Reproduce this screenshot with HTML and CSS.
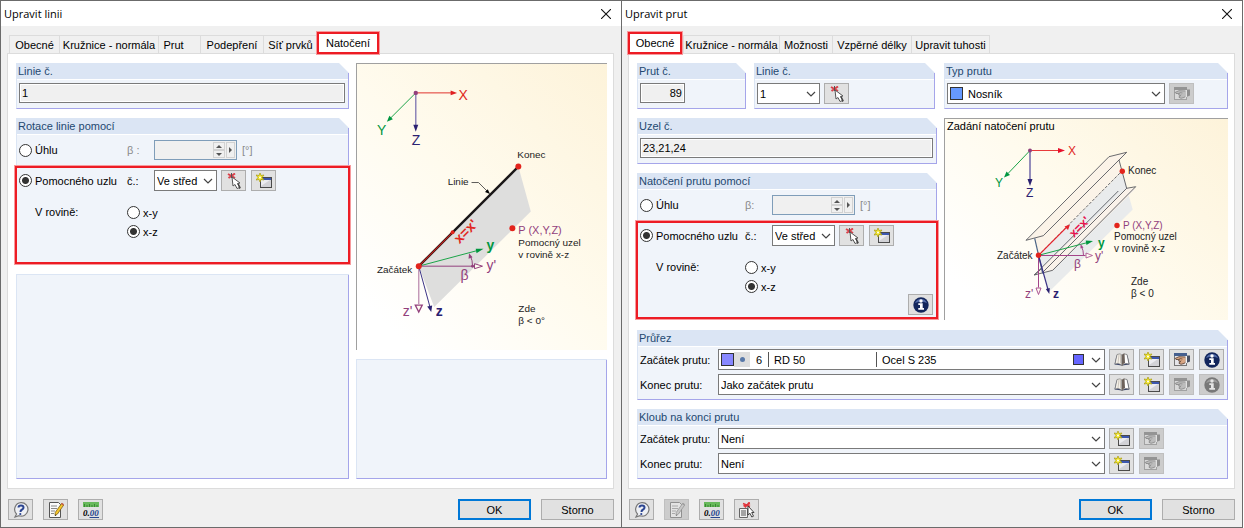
FILE: index.html
```html
<!DOCTYPE html>
<html lang="cs">
<head>
<meta charset="utf-8">
<title>Upravit linii / Upravit prut</title>
<link rel="stylesheet" href="styles.css">
</head>
<body>
<svg class="sprite" aria-hidden="true">
  <symbol id="chevron" viewBox="0 0 10 6"><path d="M1 1l4 4 4-4" fill="none" stroke="#444" stroke-width="1.2"/></symbol>
  <symbol id="close" viewBox="0 0 10 10"><path d="M0 0l10 10M10 0L0 10" stroke="#111" stroke-width="1.1"/></symbol>
  <symbol id="pick" viewBox="0 0 16 16">
    <path d="M2 1l7 4M9 .5L2.500 5" stroke="#d9414a" stroke-width="2"/><path d="M5.500 0v5" stroke="#555" stroke-width="1"/>
    <path d="M6 4l1 9 2-1.500 2 4 2.500-1-2-4 2.500-.5z" fill="#fff" stroke="#555" stroke-width="1"/>
    <path d="M12 10.500l2 4-1 1" fill="none" stroke="#444" stroke-width="1.400"/>
  </symbol>
  <symbol id="new" viewBox="0 0 16 16">
    <rect x="4.500" y="4.500" width="11" height="10" fill="#d2d2d6" stroke="#4a4a4a"/><path d="M5 5h10v2H5z" fill="#3c57b0"/><path d="M5 7h9L5 13z" fill="#ececf0"/>
    <path d="M4 0l1 2.500L8 2 6 4.500 8 7 5 6.500 4 9 3 6.500 0 7l2-2.500L0 2l3 .5z" fill="#f3e62a" stroke="#a89c10" stroke-width=".7"/><circle cx="4" cy="4.500" r="1" fill="#fff"/>
  </symbol>
  <symbol id="edit" viewBox="0 0 16 16">
    <rect x=".5" y="1.500" width="12" height="12" fill="#e6e6ea" stroke="#777"/><path d="M0 1h13v3H0z" fill="#46608f"/>
    <path d="M1 6.500l4-1.800 7 .3v5l-2 1.500-3 .8-2-1 1.500-1.800-2-.7 1-1.300H2z" fill="#d8a684" stroke="#54392a" stroke-width=".8"/>
    <path d="M7 8.500l-2 2M5.500 6.500l3 .5" stroke="#54392a" stroke-width=".7"/>
    <path d="M12.500 3.500H16v6l-3.500 1.500z" fill="#4a5264"/><path d="M11.500 4H13v7h-1.500z" fill="#f4f4f4"/>
  </symbol>
  <symbol id="info" viewBox="0 0 16 16">
    <circle cx="8" cy="8" r="7.700" fill="#13265c"/><path d="M2 6a6.500 6.500 0 0 1 12 0Q8 3 2 6z" fill="#526ba8"/>
    <circle cx="8" cy="4" r="1.700" fill="#fff"/><path d="M5.300 6.300h4.400V11H11v1.800H5.300V11H7V8H5.300z" fill="#fff"/>
  </symbol>
  <symbol id="book" viewBox="0 0 16 16">
    <path d="M.5 12.500L2.500 3.500h11l2 9-7.500 1z" fill="#39456b"/>
    <path d="M1 12L3 2.500q3.500-1.500 5 .5v10.500Q5 10.500 1 12z" fill="#f4f0e8" stroke="#777" stroke-width=".7"/>
    <path d="M15 12L13 2.500Q9.500 1 8 3v10.500q3-3 7-1.500z" fill="#fff" stroke="#666" stroke-width=".7"/>
    <path d="M8 3q1-1.500 2.500-1.500L11 11q-2 .5-3 2.500z" fill="#6d625b"/><path d="M5 3L4 11M6.500 3v8.500" stroke="#c2bab0" stroke-width=".8"/>
  </symbol>
  <symbol id="help" viewBox="0 0 16 16">
    <path d="M8 .7a6.700 6.700 0 1 1-2 13L2 15l1.500-3A6.700 6.700 0 0 1 8 .7z" fill="#eef0f4" stroke="#777" stroke-width="1.200"/>
    <path d="M5.500 5.500Q5.500 3.500 8 3.500t2.500 2Q10.500 7 8.500 8 7.500 8.500 7.500 10" fill="none" stroke="#2c4591" stroke-width="2"/><circle cx="7.300" cy="12" r="1.100" fill="#2c4591"/>
  </symbol>
  <symbol id="note" viewBox="0 0 16 16">
    <path d="M1.500 .5h9l2 2v13h-11z" fill="#fafafa" stroke="#555"/><path d="M3 4h6M3 6.500h6M3 9h4M3 11.500h3" stroke="#888"/>
    <path d="M13.500 1.500l2.200 1.500-6.200 9-2.500 1.500.2-3z" fill="#f5c52a" stroke="#6b5210" stroke-width=".7"/><path d="M14 .7l2 1.500-.8 1.300-2.200-1.500z" fill="#c85b4c"/><path d="M7 14l.2-1.500 1.200.7z" fill="#222"/>
  </symbol>
  <symbol id="units" viewBox="0 0 16 16">
    <rect x="0" y="0" width="16" height="5" fill="#67b95b"/><path d="M1.500 2v3M4 3v2M6.500 2v3M9 3v2M11.500 2v3M14 3v2" stroke="#2e7a2a" stroke-width=".8"/>
    <path d="M6.500 15.500H16" stroke="#26468f"/>
  </symbol>
  <symbol id="listpick" viewBox="0 0 16 16">
    <path d="M.5 6.500h8v9h-8z" fill="#f2f2f2" stroke="#666"/><path d="M2 9h5M2 11h5M2 13h5" stroke="#555"/>
    <path d="M4 1.500l7 3M10.500 0L6 5.500M4.500 4L11 1.500" stroke="#e0343c" stroke-width="1.500"/>
    <path d="M9 4v9l2-1.700 1.800 3.700 1.700-.8-1.800-3.700H15z" fill="#fff" stroke="#333" stroke-width=".9"/>
  </symbol>
</svg>

<main class="desktop">
  <section class="window" aria-label="Upravit linii">
    <header class="titlebar"><h1>Upravit linii</h1><button class="close" aria-label="Zavřít"><svg><use href="#close"/></svg></button></header>
    <nav class="tabs tabs-line" role="tablist">
      <button role="tab" class="tab">Obecné</button><button role="tab" class="tab">Kružnice - normála</button><button role="tab" class="tab">Prut</button><button role="tab" class="tab">Podepření</button><button role="tab" class="tab">Síť prvků</button><button role="tab" class="tab active" aria-selected="true">Natočení</button>
    </nav>
    <div class="panel">
      <div class="cols cols-line">
        <div class="stack">
          <section class="group">
            <h2><label for="line-no">Linie č.</label></h2>
            <div class="body"><input id="line-no" class="field" value="1" readonly></div>
          </section>
          <section class="group">
            <h2>Rotace linie pomocí</h2>
            <div class="body rotation">
              <div class="row">
                <label class="radio"><input type="radio" name="l-mode">Úhlu</label>
                <label class="muted" for="l-beta">β :</label>
                <div class="tools">
                  <span class="spinner"><input id="l-beta" disabled><span class="updown"><button disabled aria-label="Více"><i class="up"></i></button><button disabled aria-label="Méně"><i class="down"></i></button></span><button class="side" disabled aria-label="Další"><i class="right"></i></button></span>
                  <span class="unit">[°]</span>
                </div>
              </div>
              <div class="callout">
                <div class="row">
                  <label class="radio"><input type="radio" name="l-mode" checked>Pomocného uzlu</label>
                  <label for="l-node">č.:</label>
                  <div class="tools">
                    <span class="select small"><select id="l-node"><option>Ve střed</option></select><svg><use href="#chevron"/></svg></span>
                    <button class="icon" aria-label="Vybrat"><svg><use href="#pick"/></svg></button>
                    <button class="icon last" aria-label="Nový"><svg><use href="#new"/></svg></button>
                  </div>
                </div>
                <div class="plane">
                  <span class="plane-label">V rovině:</span>
                  <div><label class="radio"><input type="radio" name="l-plane">x-y</label><label class="radio"><input type="radio" name="l-plane" checked>x-z</label></div>
                </div>
              </div>
            </div>
          </section>
          <section class="group empty"></section>
        </div>
        <div class="stack">
          <svg class="picture" viewBox="356 63 251 287" role="img" aria-label="Natočení linie">
            <path d="M518 166l12.500 45-97 96L418 266z" fill="#dededd"/>
            <path d="M415 92h37" stroke="#e0322c"/><path d="M450 89.500l6.500 2.500-6.500 2.500z" fill="#e02020"/>
            <path d="M415 92l-26 26" stroke="#1aa348"/><path d="M386 121l2.500-6 3.500 3.500z" fill="#009640"/>
            <path d="M415 92v33" stroke="#8d84b8" stroke-width="1.500"/><path d="M412.500 124h5l-2.500 7z" fill="#2b2171"/>
            <circle cx="415" cy="92" r="2.200" fill="#92407c"/>
            <text x="458" y="99" class="t14 red">X</text><text x="376" y="134" class="t14 green">Y</text><text x="411" y="144" class="t14 navy">Z</text>
            <path d="M418 266L518 166" stroke="#1a1718" stroke-width="2.400"/>
            <path d="M418 266l34-34" stroke="#c5201c" stroke-width="1.200"/>
            <path d="M471 182h7l9 9" fill="none" stroke="#333" stroke-width=".8"/><path d="M489.500 193.500l-5-2 2.800-2.800z"/>
            <text x="517" y="157" class="t10">Konec</text><text x="447" y="184" class="t10">Linie</text><text x="376" y="273" class="t10">Začátek</text>
            <path d="M418 266l60-16" stroke="#1aa348"/><path d="M483 248.500l-7 4.500-.8-4.500z" fill="#009640"/>
            <path d="M418 266h56" stroke="#92407c"/><path d="M474 263.500l8 2.500-8 2.500z" fill="#fffdf2" stroke="#92407c"/>
            <path d="M472 266q0-6-2-10" fill="none" stroke="#92407c"/><path d="M468.500 253l3.500 4-4 1.500z" fill="#92407c"/><circle cx="472" cy="266" r="1.500" fill="#92407c"/>
            <path d="M418 266v38" stroke="#bd8db0" stroke-width="1.300"/><path d="M414.500 305h7l-3.500 7z" fill="#fffdf2" stroke="#92407c" stroke-width="1.300"/>
            <path d="M418 266l11 40" stroke="#3a3285"/><path d="M430.500 312l-4-5.500 5-1z" fill="#2b2171"/>
            <circle cx="418" cy="266" r="3" fill="#e3241c"/><circle cx="518" cy="166" r="3" fill="#e3241c"/><circle cx="452" cy="232" r="2" fill="#e3241c"/><circle cx="512" cy="228" r="3" fill="#e3241c"/>
            <text transform="translate(459 244) rotate(-45)" class="t14 red bold">x=x'</text>
            <text x="486" y="250" class="t14 green bold">y</text><text x="486" y="270" class="t14 plum">y'</text><text x="460" y="280" class="t14 plum">β</text>
            <text x="402" y="316" class="t14 plum">z'</text><text x="435" y="316" class="t14 navy bold">z</text>
            <text x="518" y="234" class="t11 plum">P (X,Y,Z)</text><text x="518" y="246" class="t10">Pomocný uzel</text><text x="518" y="258" class="t10">v rovině x-z</text>
            <text x="518" y="312" class="t10">Zde</text><text x="518" y="324" class="t10">β &lt; 0°</text>
          </svg>
          <section class="group empty"></section>
        </div>
      </div>
    </div>
    <footer class="actions">
      <button class="icon" aria-label="Nápověda"><svg><use href="#help"/></svg></button>
      <button class="icon" aria-label="Komentář"><svg><use href="#note"/></svg></button>
      <button class="icon" aria-label="Jednotky"><svg viewBox="0 0 16 16"><use href="#units"/><text x="0" y="14" class="units-text">0.<tspan fill="#26468f">00</tspan></text></svg></button>
      <span class="fill"></span>
      <button class="btn primary">OK</button><button class="btn">Storno</button>
    </footer>
  </section>

  <section class="window member" aria-label="Upravit prut">
    <header class="titlebar"><h1>Upravit prut</h1><button class="close" aria-label="Zavřít"><svg><use href="#close"/></svg></button></header>
    <nav class="tabs tabs-member" role="tablist">
      <button role="tab" class="tab active" aria-selected="true">Obecné</button><button role="tab" class="tab">Kružnice - normála</button><button role="tab" class="tab">Možnosti</button><button role="tab" class="tab">Vzpěrné délky</button><button role="tab" class="tab">Upravit tuhosti</button>
    </nav>
    <div class="panel">
      <div class="cols cols-member">
        <div class="stack">
          <div class="pair">
            <section class="group">
              <h2><label for="m-no">Prut č.</label></h2>
              <div class="body"><input id="m-no" class="field number" value="89" readonly></div>
            </section>
            <section class="group">
              <h2><label for="m-line">Linie č.</label></h2>
              <div class="body tools">
                <span class="select small"><select id="m-line"><option>1</option></select><svg><use href="#chevron"/></svg></span>
                <button class="icon" aria-label="Vybrat"><svg><use href="#pick"/></svg></button>
              </div>
            </section>
          </div>
          <section class="group">
            <h2><label for="m-nodes">Uzel č.</label></h2>
            <div class="body"><input id="m-nodes" class="field" value="23,21,24" readonly></div>
          </section>
          <section class="group">
            <h2>Natočení prutu pomocí</h2>
            <div class="body rotation">
              <div class="row">
                <label class="radio"><input type="radio" name="m-mode">Úhlu</label>
                <label class="muted" for="m-beta">β:</label>
                <div class="tools">
                  <span class="spinner"><input id="m-beta" disabled><span class="updown"><button disabled aria-label="Více"><i class="up"></i></button><button disabled aria-label="Méně"><i class="down"></i></button></span><button class="side" disabled aria-label="Další"><i class="right"></i></button></span>
                  <span class="unit">[°]</span>
                </div>
              </div>
              <div class="callout">
                <div class="row">
                  <label class="radio"><input type="radio" name="m-mode" checked>Pomocného uzlu</label>
                  <label for="m-node">č.:</label>
                  <div class="tools">
                    <span class="select small"><select id="m-node"><option>Ve střed</option></select><svg><use href="#chevron"/></svg></span>
                    <button class="icon" aria-label="Vybrat"><svg><use href="#pick"/></svg></button>
                    <button class="icon last" aria-label="Nový"><svg><use href="#new"/></svg></button>
                  </div>
                </div>
                <div class="plane">
                  <span class="plane-label">V rovině:</span>
                  <div><label class="radio"><input type="radio" name="m-plane">x-y</label><label class="radio"><input type="radio" name="m-plane" checked>x-z</label></div>
                  <button class="icon info" aria-label="Informace"><svg><use href="#info"/></svg></button>
                </div>
              </div>
            </div>
          </section>
        </div>
        <div class="stack">
          <section class="group">
            <h2><label for="m-type">Typ prutu</label></h2>
            <div class="body tools">
              <span class="select type"><select id="m-type"><option>Nosník</option></select><i class="swatch"></i><svg><use href="#chevron"/></svg></span>
              <button class="icon" disabled aria-label="Upravit typ"><svg><use href="#edit"/></svg></button>
            </div>
          </section>
          <svg class="picture" viewBox="945 119 283 201" role="img" aria-label="Natočení prutu">
            <path d="M1038.500 255.500L1122 171l10.700 38.500-83.400 82z" fill="#e9ebec"/>
            <path d="M1026 240.300l83-83.600 17.700-4.400-7.500 8.500 3 11L1039 255l-4.300-17z" fill="#fbf3e8"/>
            <path d="M1034 275l92.700-87 9 .7-83 82z" fill="#faf2ea"/>
            <text x="947" y="130" class="t11 ink">Zadání natočení prutu</text>
            <path d="M1030 150.500h30" stroke="#e83a3a"/><path d="M1058 148l7 2.500-7 2.500z" fill="#e8102c"/>
            <path d="M1030 150.500l-22 23" stroke="#1aa348"/><path d="M1004 177.500l2.500-6 3.500 3.500z" fill="#009640"/>
            <path d="M1030 150.500v29" stroke="#6f67a8" stroke-width="1.500"/><path d="M1027.500 179h5l-2.500 7z" fill="#2b2171"/>
            <circle cx="1030" cy="150.500" r="2" fill="#92407c"/>
            <text x="1068" y="155" class="t12 red">X</text><text x="995" y="187" class="t12 green">Y</text><text x="1026" y="197" class="t12 navy">Z</text>
            <g fill="none" stroke="#44464e" stroke-width=".8">
              <path d="M1026 240.300l83-83.600 17.700-4.400-83.400 83.400z"/>
              <path d="M1034.300 275l84-84M1042 273l84.700-84.700 9-1.600-83 83.600-18.400 4.700 8-7"/>
              <path d="M1119 160l7.700 28.500"/><path d="M1038.500 255.300L1122 171" stroke-dasharray="3 1.500"/>
            </g>
            <path d="M1034.700 238.300l8 35" stroke="#4b6486" stroke-width="1.200"/>
            <path d="M1038.500 255.300l28-28" stroke="#e8202a" stroke-width="1.200"/><path d="M1070 224.500l-2 5.500-3.500-3.500z" fill="#e8202a"/>
            <path d="M1038.500 255.300l50-13" stroke="#1aa348"/><path d="M1093 241l-6.500 4-.8-4.500z" fill="#009640"/>
            <path d="M1038.500 255.500h47" stroke="#a34489"/><path d="M1086 253l6.500 2.500-6.500 2.500z" fill="#fffdf2" stroke="#a34489" stroke-width=".8"/>
            <path d="M1083.500 255.500q0-5-2-9" fill="none" stroke="#a34489"/><path d="M1080.500 244l3 3.500-3 1z" fill="#a34489"/>
            <path d="M1038.500 255.500v32" stroke="#a34489"/><path d="M1036 288h5l-2.500 6.500z" fill="#fffdf2" stroke="#a34489" stroke-width=".9"/>
            <path d="M1038.500 255.500l9.500 34" stroke="#3a3285" stroke-width="1.200"/><path d="M1049.300 294l-3.500-5 4-1z" fill="#2b2171"/>
            <circle cx="1038.500" cy="255.300" r="2.700" fill="#e3241c"/><circle cx="1122.300" cy="171.300" r="2.700" fill="#e3241c"/><circle cx="1117" cy="225.500" r="2.700" fill="#e3241c"/>
            <text transform="translate(1074 238) rotate(-45)" class="t12 crimson bold">x=x'</text>
            <text x="1128" y="174" class="t10">Konec</text><text x="997" y="259" class="t10">Začátek</text>
            <text x="1098" y="247" class="t12 green bold">y</text><text x="1095" y="260" class="t12 plum">y'</text><text x="1074" y="268" class="t12 plum">β</text>
            <text x="1025" y="298" class="t12 plum">z'</text><text x="1053" y="298" class="t12 navy bold">z</text>
            <text x="1123" y="229" class="t10 plum">P (X,Y,Z)</text><text x="1114" y="240" class="t10">Pomocný uzel</text><text x="1114" y="252" class="t10">v rovině x-z</text>
            <text x="1131" y="285" class="t10">Zde</text><text x="1131" y="297" class="t10">β &lt; 0</text>
          </svg>
        </div>
      </div>
      <section class="group section-group">
        <h2>Průřez</h2>
        <div class="body lines">
          <div class="line">
            <label for="s-start">Začátek prutu:</label>
            <span class="select detailed"><select id="s-start"><option>6</option></select>
              <span class="material"><i class="swatch"></i><i class="shape"></i><span class="name">RD 50</span><span class="steel">Ocel S 235</span><i class="swatch tail"></i></span>
              <svg><use href="#chevron"/></svg></span>
            <button class="icon" aria-label="Knihovna"><svg><use href="#book"/></svg></button><button class="icon" aria-label="Nový"><svg><use href="#new"/></svg></button><button class="icon" aria-label="Upravit"><svg><use href="#edit"/></svg></button><button class="icon" aria-label="Informace"><svg><use href="#info"/></svg></button>
          </div>
          <div class="line">
            <label for="s-end">Konec prutu:</label>
            <span class="select"><select id="s-end"><option>Jako začátek prutu</option></select><svg><use href="#chevron"/></svg></span>
            <button class="icon" aria-label="Knihovna"><svg><use href="#book"/></svg></button><button class="icon" aria-label="Nový"><svg><use href="#new"/></svg></button><button class="icon" disabled aria-label="Upravit"><svg><use href="#edit"/></svg></button><button class="icon" disabled aria-label="Informace"><svg><use href="#info"/></svg></button>
          </div>
        </div>
      </section>
      <section class="group">
        <h2>Kloub na konci prutu</h2>
        <div class="body lines">
          <div class="line">
            <label for="h-start">Začátek prutu:</label>
            <span class="select"><select id="h-start"><option>Není</option></select><svg><use href="#chevron"/></svg></span>
            <button class="icon" aria-label="Nový"><svg><use href="#new"/></svg></button><button class="icon" disabled aria-label="Upravit"><svg><use href="#edit"/></svg></button>
          </div>
          <div class="line">
            <label for="h-end">Konec prutu:</label>
            <span class="select"><select id="h-end"><option>Není</option></select><svg><use href="#chevron"/></svg></span>
            <button class="icon" aria-label="Nový"><svg><use href="#new"/></svg></button><button class="icon" disabled aria-label="Upravit"><svg><use href="#edit"/></svg></button>
          </div>
        </div>
      </section>
    </div>
    <footer class="actions">
      <button class="icon" aria-label="Nápověda"><svg><use href="#help"/></svg></button>
      <button class="icon" disabled aria-label="Komentář"><svg><use href="#note"/></svg></button>
      <button class="icon" aria-label="Jednotky"><svg viewBox="0 0 16 16"><use href="#units"/><text x="0" y="14" class="units-text">0.<tspan fill="#26468f">00</tspan></text></svg></button>
      <button class="icon" aria-label="Převzít"><svg><use href="#listpick"/></svg></button>
      <span class="fill"></span>
      <button class="btn primary">OK</button><button class="btn">Storno</button>
    </footer>
  </section>
</main>
</body>
</html>
```
FILE: styles.css
```css
* { box-sizing: border-box; }
body { margin: 0; background: #fff; color: #000; font: 11px/14px "Liberation Sans", Arial, sans-serif; }
button, input, select { margin: 0; padding: 0; font: inherit; color: inherit; border-radius: 0; }
h1, h2 { margin: 0; font-weight: 400; }
.sprite { display: none; }

.desktop { display: grid; grid-template-columns: 621fr 622fr; min-height: 100vh; padding-right: 1px; }
.window { display: flex; flex-direction: column; min-width: 0; background: #f0f0f0; border: 1px solid #6b6b6b; border-right: 0; }
.window:last-child { border-right: 1px solid #6b6b6b; }

.titlebar { display: flex; align-items: center; justify-content: space-between; height: 25px; padding: 0 10px 0 3px; background: #fff; }
.titlebar h1 { font: 11px/15px "Open Sans", "Noto Sans", sans-serif; }
.close { display: flex; border: 0; background: none; }
.close svg { width: 10px; height: 10px; }

.tabs { display: grid; height: 19px; margin: 9px 7px -1px 6px; }
.tabs-line { grid-template-columns: 50px 99px 42px 63px 54px 63px; padding-left: 2px; }
.tabs-member { grid-template-columns: 55px 96px 53px 79px 79px; }
.tab { padding: 0; border: 1px solid #dcdcdc; border-right: 0; background: #f0f0f0; text-align: center; white-space: nowrap; }
.tab:last-child { border-right: 1px solid #dcdcdc; }
.tabs-line .tab:nth-child(3) { padding-right: 12px; }
.tab.active { z-index: 1; margin: -4px 0 -1px -1px; border: 3px solid #ed1c24; outline: 1px solid #f79a9d; outline-offset: -1px; background: #fff; }

.panel { display: flex; flex: 1; flex-direction: column; margin: 0 7px 0 6px; padding: 9px 6px 9px 8px; background: #fff; border: 1px solid #dcdcdc; }
.cols { display: grid; gap: 7px; }
.cols-line { flex: 1; grid-template-columns: 333fr 251fr; }
.cols-member { grid-template-columns: 300fr 284fr; }
.stack { display: flex; flex-direction: column; gap: 9px; min-width: 0; }
.pair { display: grid; grid-template-columns: 109fr 181fr; gap: 8px; padding-right: 2px; }

.group { position: relative; background: #f0f4fa; border-left: 1px solid #dbe5f4; border-bottom: 1px solid #a5a5ea; }
.group::after { content: ""; position: absolute; top: 10px; right: 0; bottom: 0; width: 1px; background: #a5a5ea; }
.group h2 { height: 17px; padding: 1px; color: #234870; font-size: 11px; line-height: 15px; background: #dbe5f4; border-bottom: 1px solid #fff; clip-path: polygon(0 0, calc(100% - 10px) 0, 100% 10px, 100% 100%, 0 100%); }
.group:has(h2) { background: linear-gradient(#fff 17px, #f0f4fa 17px); }
.body { padding: 3px 4px 5px 2px; }
.empty { flex: 1; border-top: 1px solid #dbe5f4; }
.empty::after { top: 0; }
.section-group { margin: 10px 0 9px; }

.field { display: block; width: 100%; height: 20px; padding: 0 2px; background: #f0f0f0; border: 1px solid #7a7a7a; box-shadow: inset 0 0 0 1px #fff; outline: 0; }
.number { width: 45px; text-align: right; }

.tools { display: flex; align-items: center; }
.body.tools { padding-bottom: 4px; }
.select { position: relative; display: block; flex: 1; min-width: 0; height: 21px; }
.select.small { flex: 0 0 63px; }
.select select { display: block; width: 100%; height: 100%; padding: 0 18px 0 2px; appearance: none; background: #fff; border: 1px solid #7a7a7a; }
.select > svg { position: absolute; top: 8px; right: 4px; width: 10px; height: 6px; pointer-events: none; }
.select.type { flex: 0 1 218px; }
.type select { padding-left: 20px; }
.swatch { width: 13px; height: 13px; background: #69f; border: 1px solid #333; }
.type .swatch { position: absolute; top: 4px; left: 3px; }
.detailed select { padding-left: 37px; }
.material { position: absolute; inset: 3px 21px 3px 3px; display: flex; align-items: center; pointer-events: none; }
.material .swatch { background: #88f; }
.shape { display: grid; place-items: center; width: 16px; height: 15px; margin-right: 18px; background: #dedede; }
.shape::after { content: ""; width: 5px; height: 5px; border-radius: 50%; background: #5878a8; }
.name, .steel { height: 15px; padding-left: 5px; border-left: 1px solid #555; line-height: 16px; }
.name { width: 108px; }
.material .tail { width: 11px; height: 11px; margin-left: auto; background: #66f; }

.icon { display: flex; flex: none; align-items: center; justify-content: center; width: 25px; height: 21px; background: #e1e1e1; border: 1px solid #adadad; }
.icon svg { width: 16px; height: 16px; }
.icon:disabled { background: #ccc; border-color: #bfbfbf; }
.icon:disabled svg { filter: grayscale(1); opacity: .5; }
.tools .icon { margin-left: 4px; }
.tools .icon.last { margin-left: 5px; }

.rotation { padding: 5px 2px 0; }
.group:has(.callout) { border-bottom: 0; }
.row { display: grid; grid-template-columns: 108px 27px 1fr; align-items: center; min-height: 20px; }
.radio { display: flex; align-items: center; gap: 3px; height: 19px; white-space: nowrap; }
.radio input { flex: none; width: 13px; height: 13px; appearance: none; background: #fff; border: 1px solid #333; border-radius: 50%; }
.radio input:checked { background: radial-gradient(circle, #333 3px, #fff 4px); }
.muted, .unit { color: #8a8a8a; }
.unit { margin-left: 5px; }
.spinner { display: flex; gap: 1px; width: 83px; height: 20px; padding: 1px; background: #f0f0f0; border: 1px solid #7f9db9; }
.spinner input { flex: 1; min-width: 0; border: 0; background: none; }
.updown { display: grid; width: 12px; }
.spinner button { display: grid; place-items: center; border: 1px solid #d2d2d2; background: #f0f0f0; }
.side { width: 9px; }
.up, .down, .right { border: 3px solid transparent; }
.up { border-top: 0; border-bottom-color: #555; }
.down { border-bottom: 0; border-top-color: #555; }
.right { border-right: 0; border-left-color: #555; }

.callout { position: relative; margin-top: 5px; padding-top: 5px; height: 100px; }
.callout::after { content: ""; position: absolute; z-index: 2; inset: 0 -4px 0 -5px; border: 3px solid #ed1c24; outline: 1px solid #f79a9d; outline-offset: -1px; pointer-events: none; }
.plane { display: grid; grid-template-columns: 92px 1fr auto; margin: 12px 0 0 16px; }
.plane-label { line-height: 19px; }
.info { align-self: end; margin: 0 2px -19px 0; }
.member .row { grid-template-columns: 105px 27px 1fr; }
.member .plane { grid-template-columns: 89px 1fr auto; }

.picture { display: block; width: 100%; height: auto; border-left: 1px solid #a0a0a0; border-top: 1px solid #a0a0a0; background: linear-gradient(45deg, #fff 10%, #fffbee 50%, #fdf3da); }
.picture text { fill: #222; }
.t10 { font-size: 10px; }
.t11 { font-size: 11px; }
.t12 { font-size: 12px; }
.t14 { font-size: 14px; }
.bold { font-weight: 700; }
.picture .red { fill: #e0281e; }
.picture .crimson { fill: #e8104c; }
.picture .green { fill: #009640; }
.picture .navy { fill: #2b2171; }
.picture .plum { fill: #92407c; }
.picture .ink { fill: #000; }
.units-text { font: italic 700 9px "Liberation Serif", serif; }

.lines { display: grid; gap: 4px; padding: 2px 4px 4px 2px; }
.line { display: grid; grid-template-columns: 78px 1fr repeat(4, 25px); align-items: center; column-gap: 5px; }
.line label { margin-right: -5px; white-space: nowrap; }
.line .select { margin: 0 -1px 0 -5px; }

.actions { display: flex; gap: 10px; padding: 10px 7px 7px; }
.fill { flex: 1; }
.btn { width: 73px; height: 21px; background: #e1e1e1; border: 1px solid #adadad; }
.btn.primary { border: 2px solid #0078d7; }
```
